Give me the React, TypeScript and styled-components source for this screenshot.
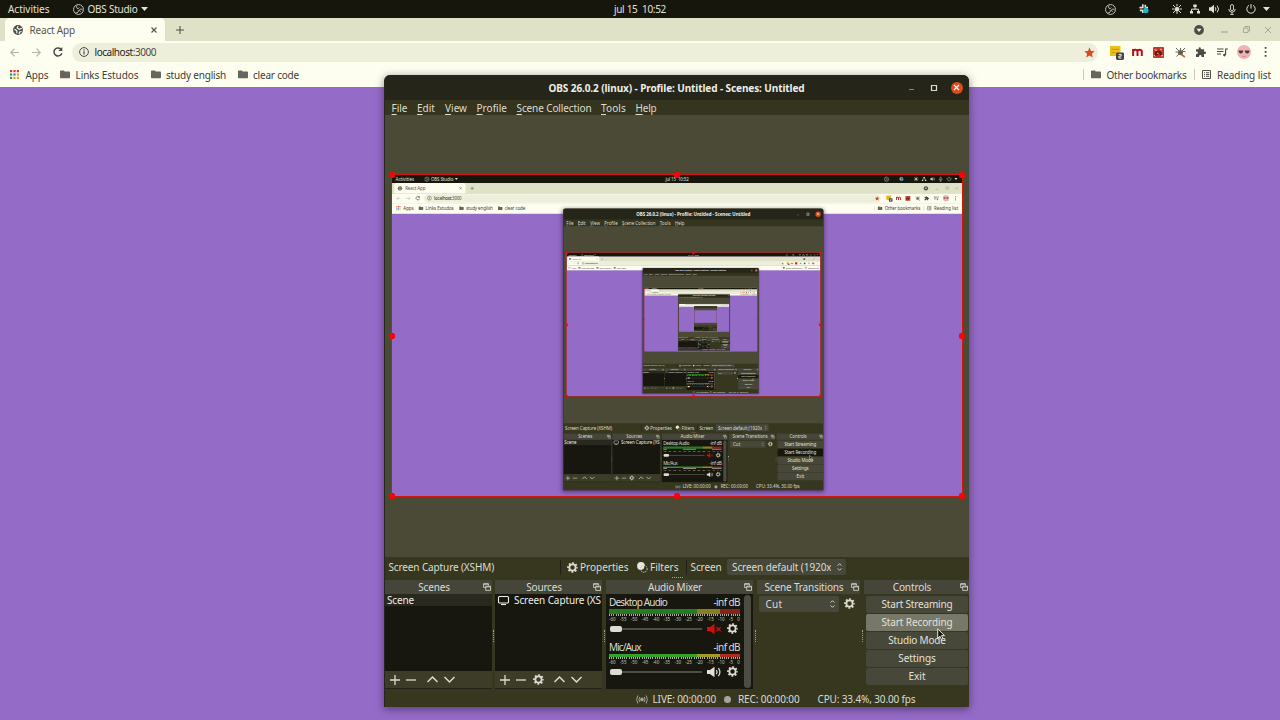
import React from "react";
import styled, { createGlobalStyle, css } from "styled-components";

const FONT = '"Noto Sans", "Open Sans", sans-serif';
const PURPLE = "#956bc8";
const MAX_DEPTH = 4;

const Global = createGlobalStyle`
  html, body { margin: 0; padding: 0; background: ${PURPLE}; overflow: hidden; }
  *, *::before, *::after { box-sizing: border-box; }
  body { width: 1280px; height: 720px; font-family: ${FONT}; }
`;

/* ---------- text with a fixed measure ---------- */
let ctx: CanvasRenderingContext2D | null = null;
const tracking = (text: string, width: number, size: number, weight: number) => {
  if (!ctx) ctx = document.createElement("canvas").getContext("2d");
  if (!ctx) return 0;
  ctx.font = `${weight} ${size}px ${FONT}`;
  return (width - ctx.measureText(text).width) / text.length;
};

const TextBox = styled.span<{ $w: number; $size: number; $weight: number; $color?: string; $ml: number }>`
  flex: none;
  display: block;
  width: ${(p) => p.$w}px;
  margin-left: ${(p) => p.$ml}px;
  font-size: ${(p) => p.$size}px;
  font-weight: ${(p) => p.$weight};
  line-height: 14px;
  white-space: pre;
  color: ${(p) => p.$color || "inherit"};
`;

type LabelProps = { text: string; w: number; size?: number; weight?: number; color?: string; ml?: number; children?: React.ReactNode };
const Label = ({ text, w, size = 10, weight = 400, color, ml = 0, children }: LabelProps) => (
  <TextBox $w={w} $size={size} $weight={weight} $color={color} $ml={ml} style={{ letterSpacing: tracking(text, w, size, weight) }}>
    {children || text}
  </TextBox>
);

/* ---------- icons ---------- */
const Glyph = styled.svg<{ $s: number; $ml?: number; $h?: number }>`
  flex: none;
  display: block;
  width: ${(p) => p.$s}px;
  height: ${(p) => p.$h || p.$s}px;
  margin-left: ${(p) => p.$ml || 0}px;
  fill: none;
  stroke: currentColor;
  overflow: visible;
`;
type IconProps = { s?: number; ml?: number };

const ObsLogo = ({ s = 12, ml }: IconProps) => (
  <Glyph $s={s} $ml={ml} viewBox="0 0 12 12" strokeWidth="0.9">
    <circle cx="6" cy="6" r="5.4" />
    <path d="M4.6 1.6C3.4 2.8 3.8 4.8 5.6 5.2M10.6 6.6C9.400 5 7.200 5.400 6.800 7M3 9.600C4.800 10 6.400 8.600 5.800 6.800M5.600 5.200l1.200-1.400M6.800 7l1.600 1.200" />
  </Glyph>
);
const Caret = ({ s = 7, ml }: IconProps) => (
  <Glyph $s={s} $ml={ml} $h={4} viewBox="0 0 7 4"><path d="M0 0h7L3.5 4z" fill="currentColor" stroke="none" /></Glyph>
);
const Gear = ({ s = 11, ml }: IconProps) => (
  <Glyph $s={s} $ml={ml} viewBox="0 0 12 12">
    <circle cx="6" cy="6" r="3.4" strokeWidth="1.9" />
    <circle cx="6" cy="6" r="4.9" strokeWidth="1.9" strokeDasharray="2 1.85" strokeDashoffset="1" />
  </Glyph>
);
const Plus = ({ s = 10, ml }: IconProps) => (
  <Glyph $s={s} $ml={ml} viewBox="0 0 10 10" strokeWidth="1.3"><path d="M5 0v10M0 5h10" /></Glyph>
);
const Minus = ({ s = 10, ml }: IconProps) => (
  <Glyph $s={s} $ml={ml} viewBox="0 0 10 10" strokeWidth="1.3"><path d="M0 5h10" /></Glyph>
);
const Up = ({ s = 11, ml }: IconProps) => (
  <Glyph $s={s} $ml={ml} viewBox="0 0 11 11" strokeWidth="1.5"><path d="M.5 8l5-5 5 5" /></Glyph>
);
const Down = ({ s = 11, ml }: IconProps) => (
  <Glyph $s={s} $ml={ml} viewBox="0 0 11 11" strokeWidth="1.5"><path d="M.5 3l5 5 5-5" /></Glyph>
);
const Folder = ({ ml }: IconProps) => (
  <Glyph $s={10} $ml={ml} $h={9} viewBox="0 0 10 9">
    <path d="M0 1.2Q0 .5.8.5h3l1 1.1h4.4q.8 0 .8.8v5.1q0 .8-.8.8H.8Q0 8.3 0 7.5z" fill="#66665c" stroke="none" />
  </Glyph>
);
const Spinner = ({ ml }: IconProps) => (
  <Glyph $s={5} $ml={ml} $h={8} viewBox="0 0 5 8" strokeWidth="0.9"><path d="M.6 2.6L2.5.7l1.9 1.9M.6 5.4l1.9 1.9 1.9-1.9" /></Glyph>
);
const Float = styled(Glyph)`
  position: absolute;
  right: 1.5px;
  top: 3px;
  color: #cfcfc4;
`;
const FloatIcon = () => (
  <Float $s={8} viewBox="0 0 8 8" strokeWidth="0.9">
    <path d="M2.5 4.5H.6V.7h4.8v1.8M.6 1.2h4.8" />
    <path d="M2.7 3.2h4.8v4.2H2.7zM2.7 3.9h4.8" />
  </Float>
);
const Speaker = ({ muted, s = 16 }: { muted?: boolean; s?: number }) => (
  <Glyph $s={s} $h={12} viewBox="0 0 16 12" strokeWidth="1.3">
    <path d="M0 3.8h3.2L8 .4v11.2L3.2 8.2H0z" fill="currentColor" stroke="none" />
    {muted ? <path d="M10 4l4.6 4.4M14.6 4L10 8.4" strokeWidth="1.4" /> : <path d="M10 4q1.6 2 0 4.2M12.1 1.8q3.4 4.2 0 8.6" />}
  </Glyph>
);

/* ---------- desktop ---------- */
const Screen = styled.div`
  position: relative;
  width: 1280px;
  height: 720px;
  overflow: hidden;
  display: flex;
  flex-direction: column;
  background: ${PURPLE};
  font-family: ${FONT};
`;
const bar = css`
  flex: none;
  display: flex;
  align-items: center;
`;
const TopBar = styled.header`
  ${bar}
  height: 18px;
  padding: 0 10px 0 8px;
  background: #16160c;
  color: #e2e2d8;
`;
const Slot = styled.span<{ $w: number; $color?: string }>`
  flex: none;
  display: flex;
  align-items: center;
  justify-content: center;
  width: ${(p) => p.$w}px;
  color: ${(p) => p.$color || "inherit"};
`;
const Spacer = styled.span`
  flex: 1;
`;
const TabStrip = styled.div`
  ${bar}
  height: 23px;
  padding-left: 5px;
  background: #e0e2c8;
  color: #50504a;
`;
const Tab = styled.div`
  ${bar}
  height: 23px;
  width: 160px;
  padding: 0 8px;
  border-radius: 5px 5px 0 0;
  background: #fdfdf0;
  color: #55554c;
`;
const Toolbar = styled.div`
  ${bar}
  height: 22px;
  background: #fdfdf0;
  color: #4a4a44;
`;
const Omnibox = styled.div`
  ${bar}
  width: 1026px;
  height: 19px;
  margin-left: 9.5px;
  padding: 0 3px 0 7px;
  border-radius: 10px;
  background: #eeefdb;
`;
const HostName = styled.span`
  color: #22221e;
`;
const Extensions = styled.div`
  ${bar}
  margin-left: 7.5px;
`;
const Bookmarks = styled.div`
  ${bar}
  height: 24px;
  padding: 0 9px 1px 10px;
  background: #fdfdf0;
  color: #3d3d38;
`;
const Divider = styled.span<{ $ml?: number }>`
  flex: none;
  width: 1px;
  height: 11px;
  margin-left: ${(p) => p.$ml || 0}px;
  background: #c8c8ba;
`;

const SystemBar = () => (
  <TopBar>
    <Label text="Activities" w={41.5} />
    <ObsLogo ml={23} s={11} />
    <Label text="OBS Studio" w={50} ml={4} />
    <Caret ml={3} />
    <Label text="jul 15  10:52" w={52} ml={466.5}>jul 15&nbsp; 10:52</Label>
    <Spacer />
    <Slot $w={22}><ObsLogo s={11} /></Slot>
    <Slot $w={45}>
      <Glyph $s={10} viewBox="0 0 10 10" strokeWidth="1.6">
        <path d="M3.8.3v4M.5 3.6h3M6.3.8v3M.8 6.400h3M3.800 6v3M7 3.600h2" />
        <circle cx="6.9" cy="6.5" r="1.900" fill="#19b9c8" stroke="#19b9c8" />
      </Glyph>
    </Slot>
    <Slot $w={21}>
      <Glyph $s={10} viewBox="0 0 10 10" strokeWidth="1">
        <circle cx="5" cy="5.2" r="2" fill="currentColor" />
        <path d="M5 0v2M5 8v2M0 5h2M8 5h2M1 1l2 2M9 1L7 3M1 9l2-2M9 9L7 7" />
      </Glyph>
    </Slot>
    <Slot $w={16}>
      <Glyph $s={10} viewBox="0 0 10 10" strokeWidth="1">
        <path d="M3.3.5h3.4v2.6H3.3zM0 7h3v2.6H0zM7 7h3v2.6H7z" fill="currentColor" stroke="none" />
        <path d="M5 3v2.2M1.5 7V5.2h7V7" />
      </Glyph>
    </Slot>
    <Slot $w={22}>
      <Glyph $s={11} $h={10} viewBox="0 0 11 10" strokeWidth="1">
        <path d="M0 3.3h2L5 .8v8.4L2 6.7H0z" fill="currentColor" stroke="none" />
        <path d="M6.3 3.3q1.3 1.7 0 3.4M8.2 1.6q2.7 3.4 0 6.8" />
      </Glyph>
    </Slot>
    <Slot $w={14}>
      <Glyph $s={8} $h={11} viewBox="0 0 8 11" strokeWidth="0.9">
        <rect x="2.5" y=".6" width="3" height="6" rx="1.5" />
        <path d="M.8 5q0 3.2 3.2 3.2T7.2 5M4 8.2v2.2M2.3 10.4h3.4" />
      </Glyph>
    </Slot>
    <Slot $w={24}>
      <Glyph $s={10} viewBox="0 0 10 10" strokeWidth="1">
        <path d="M5 0v4.6M3 1.3a4.2 4.2 0 1 0 4 0" />
      </Glyph>
    </Slot>
    <Caret />
  </TopBar>
);

const extensions = [
  <Glyph $s={12} $h={13} viewBox="0 0 12 13" key="notes">
    <rect width="10.5" height="10" fill="#eebf18" stroke="none" />
    <path d="M1.5 3.4h7.5M1.5 6.6h4" stroke="#b98c10" strokeWidth=".8" />
    <rect x="6" y="6.4" width="8" height="7.6" rx="1.4" fill="#44443e" stroke="none" />
    <path d="M8.6 8.4h2.6v1.8H8.9v1.9h2.5" stroke="#fff" strokeWidth="0.9" />
  </Glyph>,
  <Glyph $s={11} $h={8} viewBox="0 0 11 8" key="m">
    <path d="M1.1 8V1M1.3 3.4q.2-1.600 2.100-1.600t2.100 1.600V8M5.500 3.400q.2-1.600 2.200-1.600t2.100 1.600V8" stroke="#b80c18" strokeWidth="2" />
  </Glyph>,
  <Glyph $s={11} viewBox="0 0 11 11" key="red">
    <rect width="11" height="11" rx="1" fill="#c93424" stroke="none" />
    <path d="M2 8.5q-.5-5 2-5l3 .5q2 .5 2 3.5l-1.500 1-2-2.500-1 2.500z" fill="#5a1d14" stroke="none" />
    <path d="M1.500 2.500l2.500 1M7 2l2 1M4 6.200h1.500M1 8l1 1.500M8 9l2-.5" stroke="#f6dccd" strokeWidth=".9" />
  </Glyph>,
  <Glyph $s={11} viewBox="0 0 11 11" key="bug" strokeWidth="1">
    <circle cx="5.5" cy="5.6" r="2" fill="#555" />
    <path d="M1 1l9 9M10 1L1.5 9.5M.5 5h3M7.5 4.6h3M5.5 1v2" stroke="#66665c" />
    <path d="M6 7.500l4 2.500" stroke="#d86a2c" strokeWidth="1.500" />
  </Glyph>,
  <Glyph $s={10} viewBox="0 0 10 10" key="puzzle">
    <path d="M0 2.3h2.7q-.7-2 1-2.1 1.7.1 1.1 2.1H8v2.4q2-.6 2 1.1T8 6.9v3H5.6Q5.9 8 4.3 8T3 9.9H0V7q1.9.3 1.9-1.2T0 4.7z" fill="#4c4c46" stroke="none" />
  </Glyph>,
  <Glyph $s={11} $h={9} viewBox="0 0 11 9" key="queue" strokeWidth="1.1">
    <path d="M0 1h6.5M0 3.5h6.5M0 6h4M8.6 7V1H11" />
    <circle cx="7.4" cy="7.1" r="1.3" fill="currentColor" stroke="none" />
  </Glyph>,
  <Glyph $s={14} viewBox="0 0 14 14" key="avatar">
    <circle cx="7" cy="7" r="7" fill="#f0b3b4" stroke="none" />
    <path d="M1.500 5.600h4.700q0 2.800-2.300 2.800t-2.400-2.800zM7.800 5.600h4.700q0 2.800-2.300 2.800T7.800 5.600z" fill="#4a3b40" stroke="none" />
    <path d="M5 11.200q2 .8 4 0" stroke="#d77f86" strokeWidth=".8" />
  </Glyph>,
  <Glyph $s={3} $h={10} viewBox="0 0 3 10" key="more">
    <path d="M.7 0h1.800v1.800H.7zM.7 4h1.800v1.800H.7zM.7 8h1.800v1.800H.7z" fill="currentColor" stroke="none" />
  </Glyph>,
];

const appDots = ["#d23a2c", "#d23a2c", "#d23a2c", "#2f9a58", "#3c76d8", "#e0a024", "#2f9a58", "#e0a024", "#e0a024"];

const Browser = () => (
  <>
    <TabStrip>
      <Tab>
        <Glyph $s={10} viewBox="0 0 10 10">
          <circle cx="5" cy="5" r="4.9" fill="#4d4d47" stroke="none" />
          <path d="M1.5 4.2l2.3 1.600v2.400M5 1.200l-.8 1.900 2 1.300 2.600-1.200M6 9l.6-2 2-.5" stroke="#fdfdf0" strokeWidth="1.2" />
        </Glyph>
        <Label text="React App" w={45.5} ml={6.5} />
        <Spacer />
        <Glyph $s={6} viewBox="0 0 6 6" strokeWidth="1.2"><path d="M.5.5l5 5M5.5.5l-5 5" /></Glyph>
      </Tab>
      <Plus s={8} ml={11} />
      <Spacer />
      <Slot $w={26}>
        <Glyph $s={10} viewBox="0 0 10 10">
          <circle cx="5" cy="5" r="4.9" fill="#4d4d47" stroke="none" />
          <path d="M2.5 3.8h5L5 7z" fill="#f5f5e4" stroke="none" />
        </Glyph>
      </Slot>
      <Slot $w={24} $color="#a3a396"><Glyph $s={7} viewBox="0 0 7 7" strokeWidth="1.2"><path d="M0 6h7" /></Glyph></Slot>
      <Slot $w={20} $color="#a3a396">
        <Glyph $s={7} viewBox="0 0 7 7" strokeWidth=".9"><path d="M.5 2H5v4.5H.5zM2 2V.5h4.5V5H5" /></Glyph>
      </Slot>
      <Slot $w={24} $color="#a3a396"><Glyph $s={6} viewBox="0 0 6 6" strokeWidth="1"><path d="M0 0l6 6M6 0L0 6" /></Glyph></Slot>
    </TabStrip>
    <Toolbar>
      <Glyph $s={9} $ml={10} viewBox="0 0 9 9" strokeWidth="1.2" color="#b4b4aa"><path d="M9 4.5H.8M4.5.6L.8 4.5l3.700 3.900" /></Glyph>
      <Glyph $s={9} $ml={12.5} viewBox="0 0 9 9" strokeWidth="1.2" color="#b4b4aa"><path d="M0 4.5h8.200M4.500.6l3.700 3.900-3.700 3.900" /></Glyph>
      <Glyph $s={10} $ml={12} viewBox="0 0 10 10" strokeWidth="1.5"><path d="M8.800 6.200A4 4 0 1 1 7.900 2.200" /><path d="M9.300 0v4H5.300z" fill="currentColor" stroke="none" /></Glyph>
      <Omnibox>
        <Glyph $s={10} viewBox="0 0 10 10" strokeWidth="1"><circle cx="5" cy="5" r="4.4" /><path d="M5 4.3v3.200M5 2.300v1.100" strokeWidth="1.2" /></Glyph>
        <Label text="localhost:3000" w={61.5} ml={5.5}>
          <HostName>localhost</HostName>:3000
        </Label>
        <Spacer />
        <Glyph $s={11} viewBox="0 0 11 11"><path d="M5.5.5l1.500 3.400 3.700.3-2.800 2.500.8 3.700-3.200-2-3.200 2 .8-3.700L.3 4.200 4 3.900z" fill="#d24a20" stroke="none" /></Glyph>
      </Omnibox>
      <Extensions>
        {extensions.map((icon, i) => <Slot $w={21.3} key={i}>{icon}</Slot>)}
      </Extensions>
    </Toolbar>
    <Bookmarks>
      <Glyph $s={9} viewBox="0 0 9 9">
        {appDots.map((c, i) => <rect key={i} x={(i % 3) * 3.4} y={Math.floor(i / 3) * 3.4} width="2.2" height="2.2" fill={c} stroke="none" />)}
      </Glyph>
      <Label text="Apps" w={23} ml={6.5} />
      <Folder ml={11.5} /><Label text="Links Estudos" w={63} ml={5.5} />
      <Folder ml={12} /><Label text="study english" w={60} ml={5.5} />
      <Folder ml={11.5} /><Label text="clear code" w={46} ml={5.5} />
      <Spacer />
      <Divider />
      <Folder ml={7} /><Label text="Other bookmarks" w={80} ml={6} />
      <Divider $ml={7} />
      <Glyph $s={9} $ml={7} viewBox="0 0 9 9" strokeWidth=".9"><path d="M.5.5h8v8h-8zM2 2.7h1M4 2.7h3.200M2 4.500h1M4 4.500h3.200M2 6.300h1M4 6.300h3.200" /></Glyph>
      <Label text="Reading list" w={54} ml={6.5} />
    </Bookmarks>
  </>
);

/* ---------- OBS window ---------- */
const Window = styled.section`
  position: absolute;
  left: 384px;
  top: 75px;
  width: 585px;
  height: 632px;
  display: flex;
  flex-direction: column;
  border-radius: 6px 6px 0 0;
  border-left: 1px solid #27271c;
  overflow: hidden;
  background: #37371f;
  color: #dcdcd2;
  box-shadow: 0 2px 9px rgba(20, 10, 30, 0.5);
`;
const TitleBar = styled.div`
  ${bar}
  height: 25px;
  background: #25251a;
  padding: 0 1.5px 0 163.5px;
`;
const Close = styled.span`
  ${bar}
  justify-content: center;
  width: 12px;
  height: 12px;
  border-radius: 50%;
  background: #dd4c1c;
  color: #fff;
`;
const MenuBar = styled.nav`
  ${bar}
  height: 15px;
  padding-left: 6.5px;
  background: #34341f;
`;
const Preview = styled.div`
  flex: none;
  height: 442px;
  padding: 60px 0 0 7px;
  background: #4a4a37;
`;
const Source = styled.div`
  position: relative;
  width: 570px;
  height: 321px;
`;
const SourceClip = styled.div`
  width: 570px;
  height: 321px;
  overflow: hidden;
  background: ${PURPLE};
`;
const Scaled = styled.div`
  width: 1280px;
  height: 720px;
  transform: scale(0.4453, 0.4458);
  transform-origin: 0 0;
`;
const Outline = styled.div`
  position: absolute;
  inset: -1px;
  border: 1.5px solid #d0180c;
`;
const Handle = styled.i<{ $x: number; $y: number }>`
  position: absolute;
  left: ${(p) => p.$x}%;
  top: ${(p) => p.$y}%;
  width: 6px;
  height: 6px;
  margin: -3px 0 0 -3px;
  border-radius: 2px;
  background: #f40606;
`;
const ContextBar = styled.div`
  ${bar}
  height: 20px;
  padding-left: 3.5px;
`;
const DarkRule = styled.span<{ $ml: number }>`
  flex: none;
  width: 1px;
  height: 15px;
  margin-left: ${(p) => p.$ml}px;
  background: #202014;
`;
const Combo = styled.span<{ $w: number; $ml: number }>`
  ${bar}
  width: ${(p) => p.$w}px;
  height: 16px;
  margin-left: ${(p) => p.$ml}px;
  padding-left: 5px;
  border-radius: 2px;
  background: #47473a;
`;
const ClipText = styled.span<{ $w: number }>`
  flex: none;
  width: ${(p) => p.$w}px;
  overflow: hidden;
`;
const Grip = styled.div`
  height: 3px;
  display: flex;
  justify-content: center;
  flex: none;
  &::after { content: ""; width: 11px; border-top: 1px dotted #a5a598; height: 1px; }
`;
const Docks = styled.div`
  flex: none;
  display: flex;
  height: 109px;
`;
const Dock = styled.div<{ $w: number }>`
  flex: none;
  display: flex;
  flex-direction: column;
  width: ${(p) => p.$w}px;
`;
const DockHead = styled.div`
  ${bar}
  position: relative;
  justify-content: center;
  height: 14px;
  padding-right: 9px;
  background: #45453a;
`;
const Splitter = styled.div<{ $w: number }>`
  flex: none;
  width: ${(p) => p.$w}px;
  padding-top: 50px;
  display: flex;
  justify-content: center;
  &::after { content: ""; height: 12px; width: 1px; border-left: 1px dotted #a0a093; }
`;
const List = styled.div`
  flex: none;
  height: 77px;
  background: #171710;
`;
const ListRow = styled.div<{ $on?: boolean }>`
  ${bar}
  height: 12px;
  padding-left: 2px;
  overflow: hidden;
  color: #eeeee6;
  background: ${(p) => (p.$on ? "#29291f" : "transparent")};
`;
const ListTools = styled.div`
  ${bar}
  height: 18px;
  padding-left: 4.5px;
  background: #3c3c29;
  border-bottom: 1px solid #222216;
`;
const Mixer = styled.div`
  display: flex;
  flex: none;
  height: 95px;
  padding: 1px 1px 1px 3px;
  background: #171710;
`;
const Tracks = styled.div`
  width: 131px;
  flex: none;
  display: flex;
  flex-direction: column;
  gap: 4.5px;
`;
const Scroll = styled.div`
  flex: none;
  width: 7px;
  height: 93px;
  margin-left: 4px;
  border-radius: 4px;
  background: #4c4c42;
`;
const TrackHead = styled.div`
  ${bar}
  height: 14px;
  justify-content: space-between;
`;
const Meter = styled.div<{ $h: number }>`
  display: flex;
  height: ${(p) => p.$h}px;
`;
const Zone = styled.div<{ $w: number; $c: string }>`
  width: ${(p) => p.$w}px;
  background: ${(p) => p.$c};
`;
const Ticks = styled.div`
  height: 2px;
  background: repeating-linear-gradient(90deg, #a9a99e 0 1px, transparent 1px 2.17px);
`;
const Scale = styled.div`
  display: flex;
  justify-content: space-between;
  height: 6px;
  font-size: 4.5px;
  line-height: 6px;
  color: #c4c4b8;
`;
const SliderRow = styled.div`
  ${bar}
  height: 14px;
`;
const Slider = styled.div`
  ${bar}
  width: 92px;
  height: 6px;
  margin: 0 4px 0 1px;
  background: linear-gradient(#4d4d42, #4d4d42) 0 center / 100% 2px no-repeat;
  &::before { content: ""; width: 12px; height: 6px; border-radius: 2px; background: #dcdcd2; }
`;
const Transitions = styled.div`
  ${bar}
  height: 19px;
`;
const Controls = styled.div`
  display: flex;
  flex-direction: column;
  gap: 1.5px;
  padding: 2px 1px 0 2px;
`;
const Button = styled.button<{ $state?: string }>`
  ${bar}
  justify-content: center;
  height: 16.5px;
  padding: 0;
  border: 0;
  border-radius: 2px;
  font-family: inherit;
  color: #e2e2d8;
  background: ${(p) => (p.$state === "hover" ? "#787868" : p.$state === "down" ? "#17170f" : "#48483a")};
`;
const Status = styled.footer`
  ${bar}
  flex: 1;
  padding: 2px 0 0 250.5px;
`;
const Dot = styled.span`
  flex: none;
  width: 7px;
  height: 7px;
  margin-left: 7.5px;
  border-radius: 50%;
  background: #a5a59a;
`;
const Pointer = styled(Glyph)`
  position: absolute;
  left: 937px;
  top: 628px;
`;
const Mnemonic = styled.u`
  text-underline-offset: 2px;
  text-decoration-thickness: 1px;
`;

const menus: [string, number, number][] = [
  ["File", 16, 0], ["Edit", 18, 9.5], ["View", 22, 10], ["Profile", 30.5, 9.5],
  ["Scene Collection", 75, 9.5], ["Tools", 25, 9.5], ["Help", 21, 9.5],
];
const buttons: [string, number][] = [
  ["Start Streaming", 71], ["Start Recording", 71], ["Studio Mode", 57.5], ["Settings", 37.5], ["Exit", 17],
];
const decibels = ["-60", "-55", "-50", "-45", "-40", "-35", "-30", "-25", "-20", "-15", "-10", "-5", "0"];
const handles = [[0, 0], [50, 0], [100, 0], [0, 50], [100, 50], [0, 100], [50, 100], [100, 100]];

const Channel = ({ name, w, muted }: { name: string; w: number; muted?: boolean }) => (
  <div>
    <TrackHead><Label text={name} w={w} /><Label text="-inf dB" w={26.5} /></TrackHead>
    <Meter $h={muted ? 4.5 : 2.5}>
      <Zone $w={88} $c={muted ? "#267c22" : "#35a02c"} />
      <Zone $w={23} $c={muted ? "#86801f" : "#a39a22"} />
      <Zone $w={20} $c={muted ? "#86241a" : "#b02c1e"} />
    </Meter>
    <Ticks />
    <Scale>{decibels.map((d) => <span key={d}>{d}</span>)}</Scale>
    <SliderRow>
      <Slider />
      <Slot $w={16} $color={muted ? "#d40f0c" : "#e2e2d8"}><Speaker muted={muted} s={15} /></Slot>
      <Gear s={11} ml={5} />
    </SliderRow>
  </div>
);

const Desktop = ({ depth }: { depth: number }) => (
  <Screen>
    <SystemBar />
    <Browser />
    <Window>
      <TitleBar>
        <Label text="OBS 26.0.2 (linux) - Profile: Untitled - Scenes: Untitled" w={256} weight={700} color="#eeeee6" />
        <Spacer />
        <Slot $w={22} $color="#8a8a80"><Glyph $s={5} viewBox="0 0 5 5" strokeWidth="1"><path d="M0 4.5h5" /></Glyph></Slot>
        <Slot $w={23}><Glyph $s={6} viewBox="0 0 6 6" strokeWidth="1.2"><path d="M.5.5h5v5h-5z" /></Glyph></Slot>
        <Slot $w={22}>
          <Close><Glyph $s={5} viewBox="0 0 5 5" strokeWidth="1.1"><path d="M0 0l5 5M5 0L0 5" /></Glyph></Close>
        </Slot>
      </TitleBar>
      <MenuBar>
        {menus.map(([t, w, ml]) => (
          <Label key={t} text={t} w={w} ml={ml}><Mnemonic>{t[0]}</Mnemonic>{t.slice(1)}</Label>
        ))}
      </MenuBar>
      <Preview>
        <Source>
          <SourceClip>{depth > 0 && <Scaled><Desktop depth={depth - 1} /></Scaled>}</SourceClip>
          <Outline />
          {handles.map(([x, y]) => <Handle key={`${x}-${y}`} $x={x} $y={y} />)}
        </Source>
      </Preview>
      <ContextBar>
        <Label text="Screen Capture (XSHM)" w={105.5} />
        <DarkRule $ml={65.5} />
        <Gear s={11} ml={6} />
        <Label text="Properties" w={48.5} ml={2.5} />
        <Glyph $s={11} $ml={8.5} viewBox="0 0 11 11">
          <circle cx="4" cy="4" r="3.9" fill="#e8e8de" stroke="none" />
          <circle cx="6.8" cy="6.8" r="3.4" stroke="#c5c5ba" strokeDasharray="1.5 .7" />
          <path d="M5 8q3 0 3-4" stroke="#37371f" strokeWidth="1.2" />
        </Glyph>
        <Label text="Filters" w={28.5} ml={2} />
        <DarkRule $ml={7} />
        <Label text="Screen" w={31} ml={4} />
        <Combo $w={119} $ml={5.5}>
          <ClipText $w={98.5}><Label text="Screen default (1920x" w={99.5} /></ClipText>
          <Spinner ml={6} />
        </Combo>
      </ContextBar>
      <Grip />
      <Docks>
        <Dock $w={107}>
          <DockHead><Label text="Scenes" w={31.5} /><FloatIcon /></DockHead>
          <List><ListRow $on><Label text="Scene" w={27} /></ListRow></List>
          <ListTools><Plus /><Minus ml={6.5} /><Up ml={10.5} /><Down ml={6} /></ListTools>
        </Dock>
        <Splitter $w={3} />
        <Dock $w={107}>
          <DockHead><Label text="Sources" w={35.5} /><FloatIcon /></DockHead>
          <List>
            <ListRow>
              <Glyph $s={11} $ml={1} $h={9} viewBox="0 0 11 9" strokeWidth="1.1"><rect x=".5" y=".5" width="10" height="6.5" rx="1" /><path d="M3 8.5h5" /></Glyph>
              <Label text="Screen Capture (XS" w={87} ml={5} />
            </ListRow>
          </List>
          <ListTools><Plus /><Minus ml={6.5} /><Gear s={11} ml={6.5} /><Up ml={10.5} /><Down ml={6} /></ListTools>
        </Dock>
        <Splitter $w={4} />
        <Dock $w={147}>
          <DockHead><Label text="Audio Mixer" w={54} /><FloatIcon /></DockHead>
          <Mixer>
            <Tracks>
              <Channel name="Desktop Audio" w={58} muted />
              <Channel name="Mic/Aux" w={31.5} />
            </Tracks>
            <Scroll />
          </Mixer>
        </Dock>
        <Splitter $w={4} />
        <Dock $w={103}>
          <DockHead><Label text="Scene Transitions" w={79} /><FloatIcon /></DockHead>
          <Transitions>
            <Combo $w={80} $ml={2}><Label text="Cut" w={17} ml={1.5} /><Spinner ml={47} /></Combo>
            <Gear s={11} ml={5} />
          </Transitions>
        </Dock>
        <Splitter $w={4} />
        <Dock $w={105}>
          <DockHead><Label text="Controls" w={38.5} /><FloatIcon /></DockHead>
          <Controls>
            {buttons.map(([t, w], i) => (
              <Button key={t} $state={i === 1 ? (depth === MAX_DEPTH ? "hover" : "down") : undefined}><Label text={t} w={w} /></Button>
            ))}
          </Controls>
        </Dock>
      </Docks>
      <Status>
        <Glyph $s={12} $h={9} viewBox="0 0 12 9" strokeWidth="1" color="#a5a59a">
          <circle cx="6" cy="4.5" r="1.4" fill="currentColor" />
          <path d="M3.8 2q-1.700 2.500 0 5M8.200 2q1.700 2.500 0 5M1.900.5q-2.600 4 0 8M10.100.5q2.600 4 0 8" />
        </Glyph>
        <Label text="LIVE: 00:00:00" w={63.5} ml={5} />
        <Dot />
        <Label text="REC: 00:00:00" w={61.5} ml={7.5} />
        <Label text="CPU: 33.4%, 30.00 fps" w={98} ml={18} />
      </Status>
    </Window>
    <Pointer $s={8} $h={12} viewBox="0 0 8 12" strokeWidth="1">
      <path d="M.7.8v9.400l2.200-2 1.600 3.200 1.500-.7-1.500-3.100h3z" fill="#15150e" stroke="#e8e8e0" />
    </Pointer>
  </Screen>
);

export default function App() {
  return (
    <>
      <Global />
      <Desktop depth={MAX_DEPTH} />
    </>
  );
}
